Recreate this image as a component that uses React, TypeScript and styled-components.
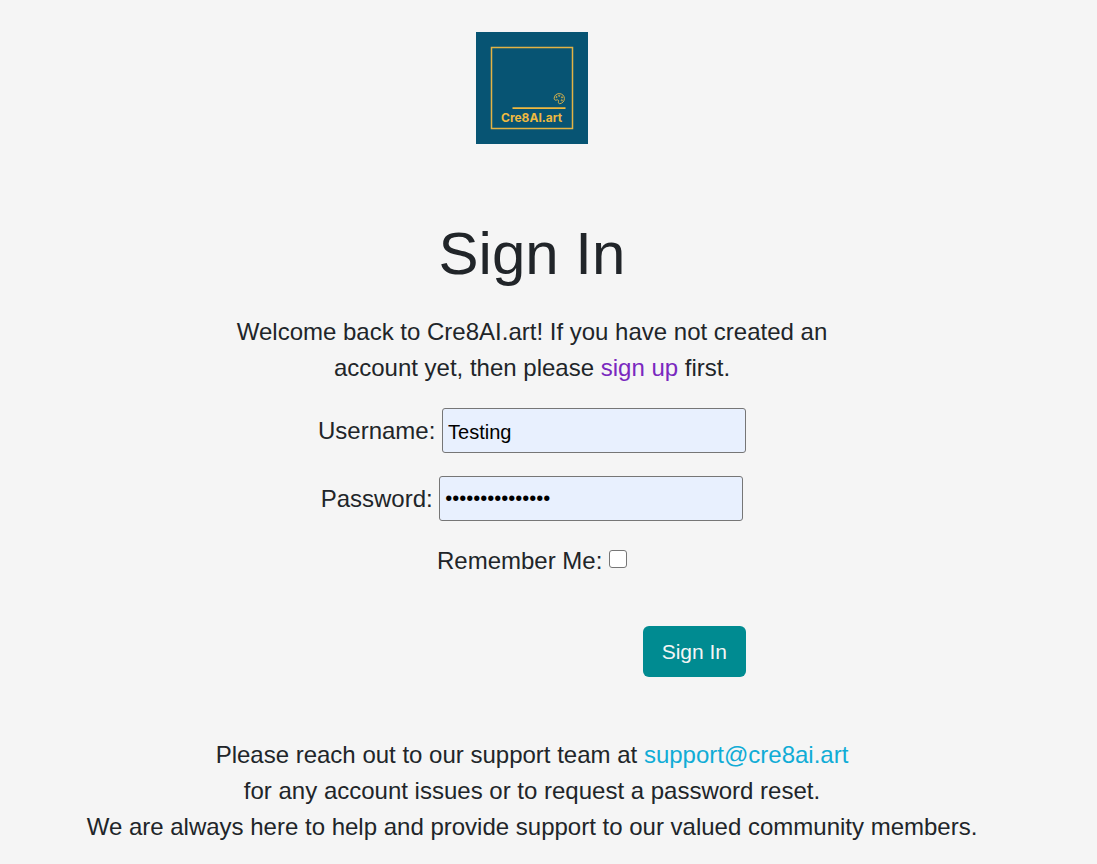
import React from "react";
import styled, { createGlobalStyle } from "styled-components";

const GlobalStyle = createGlobalStyle`
  *, *::before, *::after { box-sizing: border-box; }
  body {
    margin: 0;
    background: #f5f5f5;
    color: #212529;
    font-family: "Liberation Sans", Arial, sans-serif;
    font-size: 24px;
    line-height: 36px;
  }
`;

const Page = styled.main`
  display: flex;
  flex-direction: column;
  align-items: center;
  padding: 32px 49px 19px 16px;
  text-align: center;
`;

const Logo = styled.svg`
  display: block;
  width: 112px;
  height: 112px;
`;

const Title = styled.h1`
  margin: 72px 0 22px;
  font-size: 60px;
  font-weight: 400;
  line-height: 76px;
`;

const Intro = styled.p`
  max-width: 640px;
  margin: 0 0 22px;
`;

const Link = styled.a<{ $visited?: boolean }>`
  color: ${({ $visited }) => ($visited ? "#7a28bf" : "#10acd6")};
  text-decoration: none;
`;

const Form = styled.form`
  display: flex;
  flex-direction: column;
  align-items: center;
`;

const Field = styled.div`
  display: flex;
  align-items: center;
  margin-bottom: 23px;
`;

const Label = styled.label`
  white-space: pre;
`;

const TextInput = styled.input`
  width: 304px;
  height: 45px;
  padding: 3px 5px 0;
  border: 1px solid #767676;
  border-radius: 3px;
  background: #e8f0fe;
  color: #000;
  font-family: inherit;
  font-size: 20px;
`;

const PasswordInput = styled(TextInput)`
  padding-top: 0;
`;

const RememberRow = styled(Field)`
  margin-bottom: 48px;
  line-height: 34px;
`;

const Checkbox = styled.input`
  width: 18px;
  height: 18px;
  margin: 0 0 4px;
  appearance: none;
  border: 1px solid #767676;
  border-radius: 3px;
  background: #fff;

  &:checked {
    background: #008b91;
  }
`;

const SubmitButton = styled.button`
  align-self: flex-end;
  height: 51px;
  padding: 0 19px;
  border: 0;
  border-radius: 6px;
  background: #008b91;
  color: #f5f5f5;
  font-family: inherit;
  font-size: 21px;
`;

const Support = styled.footer`
  margin-top: 60px;
`;

function BrandLogo() {
  return (
    <Logo viewBox="0 0 112 112" role="img" aria-label="Cre8AI.art">
      <rect width="112" height="112" fill="#075473" />
      <rect x="15.5" y="15.5" width="81" height="81" fill="none" stroke="#e2b345" strokeWidth="1.5" />
      <g fill="none" stroke="#d5b04b" strokeWidth="1">
        <path d="M83.2 61.6c-3 0-5.2 2.2-5 5 0 1.4 1.2 1.9 2.5 1.4 1.5-.5 2.3.4 1.8 1.7-.4 1.2.1 2 1.3 2 2.6-.3 4.6-2.5 4.6-5.1 0-2.8-2.2-5-5.2-5z" />
        <circle cx="80.5" cy="65" r="0.6" />
        <circle cx="83.2" cy="63.8" r="0.6" />
        <circle cx="86" cy="65.3" r="0.6" />
        <circle cx="85.8" cy="68.3" r="0.6" />
      </g>
      <path d="M36.5 76.2H89.5" stroke="#efb940" strokeWidth="1.8" />
      <text x="25" y="90" fill="#efb940" fontFamily="Inter, sans-serif" fontSize="12" fontWeight="700">
        Cre8AI.art
      </text>
    </Logo>
  );
}

export default function App() {
  return (
    <>
      <GlobalStyle />
      <Page>
        <BrandLogo />
        <Title>Sign In</Title>
        <Intro>
          Welcome back to Cre8AI.art! If you have not created an account yet, then please{" "}
          <Link href="#signup" $visited>sign up</Link> first.
        </Intro>
        <Form onSubmit={(event) => event.preventDefault()}>
          <Field>
            <Label htmlFor="username">{"Username: "}</Label>
            <TextInput id="username" type="text" defaultValue="Testing" />
          </Field>
          <Field>
            <Label htmlFor="password">{"Password: "}</Label>
            <PasswordInput id="password" type="password" defaultValue="testingpassword" />
          </Field>
          <RememberRow>
            <Label htmlFor="remember">{"Remember Me: "}</Label>
            <Checkbox id="remember" type="checkbox" />
          </RememberRow>
          <SubmitButton type="submit">Sign In</SubmitButton>
        </Form>
        <Support>
          Please reach out to our support team at{" "}
          <Link href="mailto:support@cre8ai.art">support@cre8ai.art</Link>
          <br />
          for any account issues or to request a password reset.
          <br />
          We are always here to help and provide support to our valued community members.
        </Support>
      </Page>
    </>
  );
}
